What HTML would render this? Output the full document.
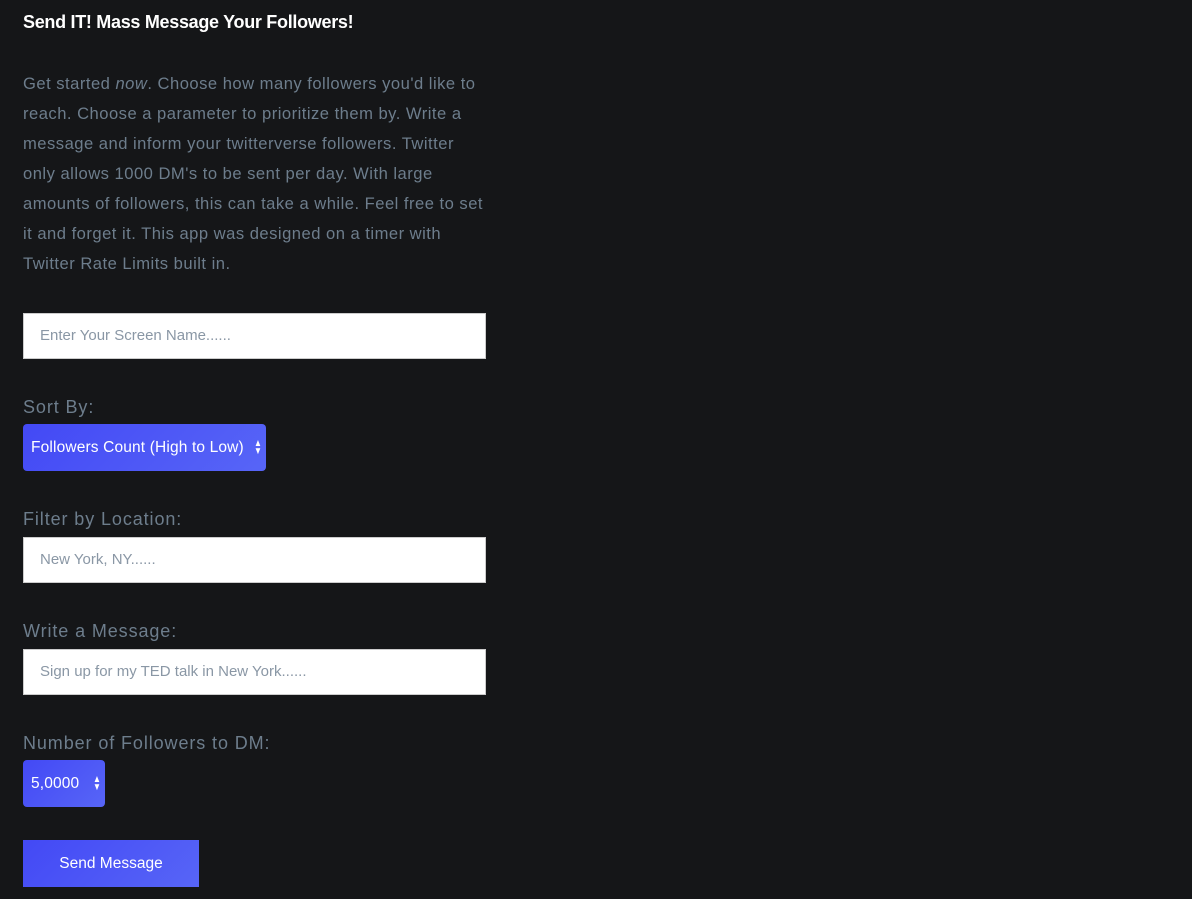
<!DOCTYPE html>
<html><head><style>
body{margin:0;background:#151618;width:1192px;height:899px;overflow:hidden;font-family:"Liberation Sans",sans-serif;position:relative}
h1{position:absolute;left:23px;top:12px;margin:0;font-size:18px;color:#fff;font-weight:bold;letter-spacing:-0.3px}
p{position:absolute;left:23px;top:69px;margin:0;font-size:16.6px;line-height:30px;color:#6d7d8c;white-space:nowrap;letter-spacing:0.48px}
.lbl{position:absolute;left:23px;font-size:18px;color:#6d7d8c;letter-spacing:0.9px}
.in{position:absolute;left:23px;width:463px;height:46px;background:#fff;border:1px solid #ccc;box-sizing:border-box;font-size:15px;color:#8a97a5;padding-left:16px;line-height:44px}
.sel{position:absolute;left:23px;height:47px;border-radius:4px;background:linear-gradient(135deg,#4349f5,#5765f7);color:#fff;font-size:15.5px;line-height:47px;padding-left:8px;box-sizing:border-box;letter-spacing:0.15px}
.arr{position:absolute;right:3px;top:16px;font-size:10px;line-height:8px;color:#fff;transform:scaleX(0.8)}
.btn{position:absolute;left:23px;top:840px;width:176px;height:47px;background:linear-gradient(135deg,#4349f5,#5765f7);color:#fff;font-size:15.5px;text-align:center;line-height:47px}
</style></head><body>
<h1>Send IT! Mass Message Your Followers!</h1>
<p>Get started <i>now</i>. Choose how many followers you'd like to<br>reach. Choose a parameter to prioritize them by. Write a<br>message and inform your twitterverse followers. Twitter<br>only allows 1000 DM's to be sent per day. With large<br>amounts of followers, this can take a while. Feel free to set<br>it and forget it. This app was designed on a timer with<br>Twitter Rate Limits built in.</p>
<div class="in" style="top:313px">Enter Your Screen Name......</div>
<div class="lbl" style="top:397px">Sort By:</div>
<div class="sel" style="top:424px;width:243px">Followers Count (High to Low)<div class="arr">▲<br>▼</div></div>
<div class="lbl" style="top:509px">Filter by Location:</div>
<div class="in" style="top:537px">New York, NY......</div>
<div class="lbl" style="top:621px">Write a Message:</div>
<div class="in" style="top:649px">Sign up for my TED talk in New York......</div>
<div class="lbl" style="top:733px">Number of Followers to DM:</div>
<div class="sel" style="top:760px;width:82px">5,0000<div class="arr">▲<br>▼</div></div>
<div class="btn">Send Message</div>
</body></html>
